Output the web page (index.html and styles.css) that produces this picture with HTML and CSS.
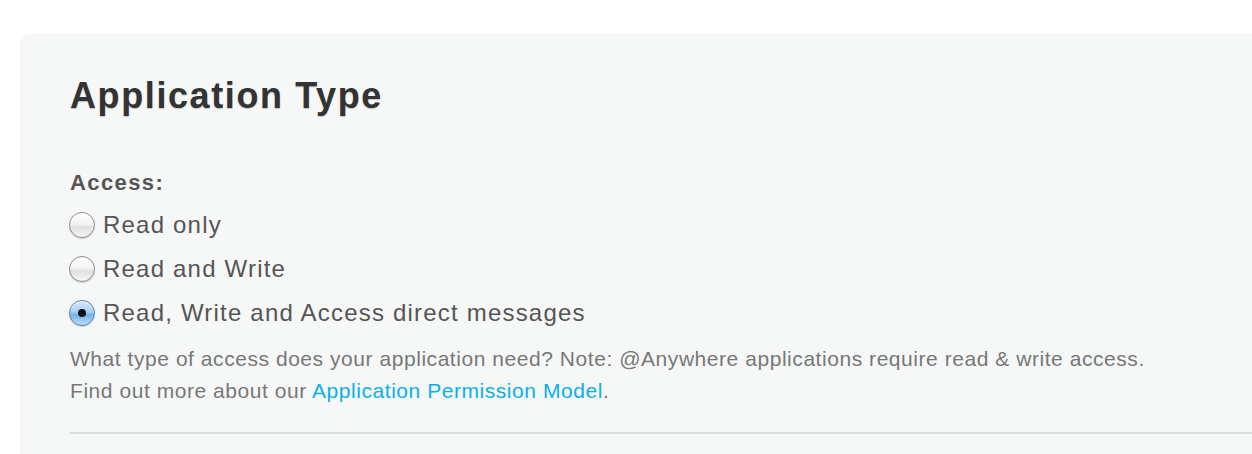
FILE: index.html
```html
<!DOCTYPE html>
<html>
<head>
<meta charset="utf-8">
<link rel="stylesheet" href="styles.css">
</head>
<body>
<div class="panel">
  <h2 class="title">Application Type</h2>
  <div class="field">
    <div class="label">Access:</div>
    <label class="option"><span class="radio"></span><span>Read only</span></label>
    <label class="option"><span class="radio"></span><span>Read and Write</span></label>
    <label class="option"><span class="radio checked"></span><span>Read, Write and Access direct messages</span></label>
    <p class="help">What type of access does your application need? Note: @Anywhere applications require read &amp; write access.<br>Find out more about our <a href="#">Application Permission Model</a>.</p>
  </div>
  <div class="divider"></div>
</div>
</body>
</html>
```

FILE: styles.css
```css
html, body {
  margin: 0;
  padding: 0;
  background: #ffffff;
  overflow: hidden;
}
body {
  width: 1252px;
  height: 454px;
  font-family: "Liberation Sans", Arial, sans-serif;
}
.panel {
  margin: 34px 0 0 20px;
  padding: 42px 0 0 50px;
  background: #f6f7f7;
  border-radius: 8px 0 0 0;
  height: 420px;
  box-sizing: border-box;
}
.title {
  margin: 0;
  font-size: 36px;
  line-height: 40px;
  font-weight: bold;
  color: #333333;
  letter-spacing: 1.6px;
  text-shadow: 0 1px 1px rgba(0,0,0,0.22);
}
.field {
  margin-top: 55px;
}
.label {
  font-size: 22px;
  line-height: 24px;
  font-weight: bold;
  color: #555555;
  letter-spacing: 1.4px;
  margin-bottom: 8px;
}
.option {
  display: flex;
  align-items: center;
  gap: 8px;
  height: 44px;
  font-size: 24px;
  letter-spacing: 1.2px;
  color: #555555;
  margin-left: -1px;
}
.radio {
  width: 26px;
  height: 26px;
  border-radius: 50%;
  box-sizing: border-box;
  border: 1px solid #8c8c8c;
  background: linear-gradient(#ffffff 0%, #f3f3f3 45%, #e0e0e0 60%, #f6f6f6 100%);
  box-shadow: 0 1px 1px rgba(0,0,0,0.18), inset 0 1px 1px #ffffff;
  position: relative;
  flex: none;
}
.radio.checked {
  border-color: #5b7fa8;
  background: linear-gradient(#d8ebfb 0%, #a6cff3 45%, #74b0e8 58%, #bfe0fb 100%);
}
.radio.checked::after {
  content: "";
  position: absolute;
  left: 50%;
  top: 50%;
  width: 8px;
  height: 8px;
  margin: -4px 0 0 -4px;
  border-radius: 50%;
  background: #111;
}
.help {
  margin: 8px 0 0 0;
  font-size: 21px;
  line-height: 32px;
  letter-spacing: 0.55px;
  color: #777777;
}
.help a {
  color: #0ab0e8;
  text-decoration: none;
}
.divider {
  margin-top: 25px;
  height: 2px;
  background: #dcdddd;
}
```
